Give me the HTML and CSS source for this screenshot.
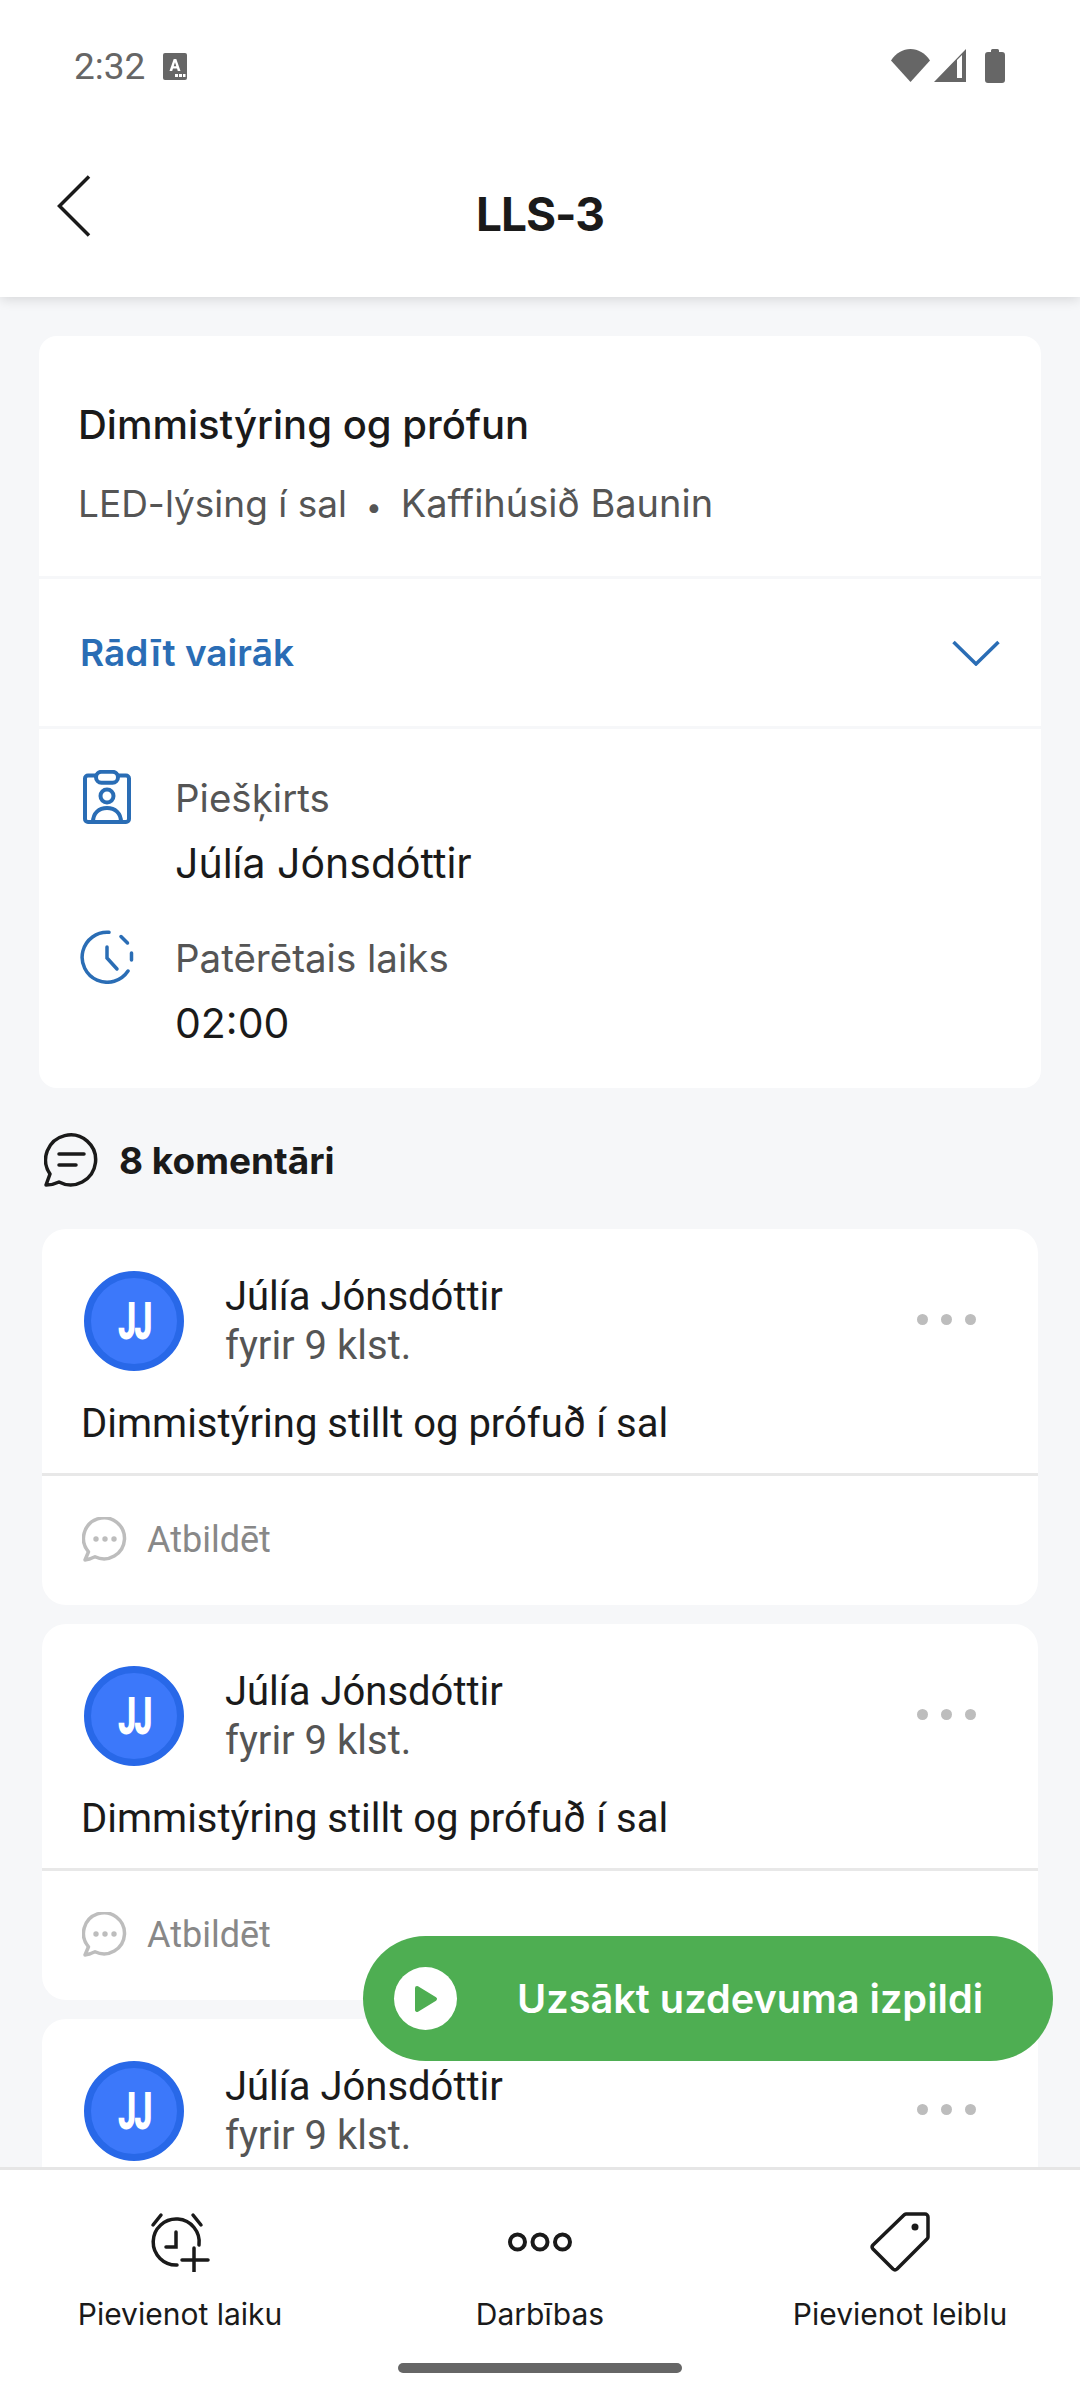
FILE: index.html
```html
<!DOCTYPE html>
<html lang="lv">
<head>
    <meta charset="UTF-8">
    <meta name="viewport" content="width=device-width, initial-scale=1.0">
    <title>LLS-3</title>
    <link rel="stylesheet" href="styles.css">
</head>
<body>
    <svg class="defs" width="0" height="0">
        <symbol id="icon-reply" viewBox="0 0 45 45">
            <path d="M3 43l3.5-8.2A20.5 20.5 0 1 1 13 39.8C9.500 41.500 6 42.800 3 43z" fill="none" stroke="#bdbdbd" stroke-width="3.500" stroke-linejoin="round"/>
            <circle cx="14" cy="22" r="2.700" fill="#bdbdbd"/>
            <circle cx="23" cy="22" r="2.700" fill="#bdbdbd"/>
            <circle cx="32" cy="22" r="2.700" fill="#bdbdbd"/>
        </symbol>
    </svg>

    <div class="status-bar">
        <div class="status-left">
            <span class="status-time">2:32</span>
            <svg width="24" height="27" viewBox="0 0 24 27">
                <rect width="24" height="27" rx="2" fill="#666"/>
                <path d="M6.500 18L10.700 6h2.600l4.200 12h-2.700l-.8-2.600H10l-.8 2.600zM10.700 13.300h2.600L12 9.200z" fill="#fff"/>
                <rect x="12" y="21" width="3" height="3" fill="#fff"/>
                <rect x="16" y="21" width="3" height="3" fill="#fff"/>
                <rect x="20" y="21" width="2.500" height="3" fill="#fff"/>
            </svg>
        </div>
        <div class="status-right">
            <svg width="39" height="33" viewBox="0 0 39 33"><path d="M0 11.500C5 4 12 0 19.500 0S34 4 39 11.500L19.500 33z" fill="#666"/></svg>
            <svg width="32" height="33" viewBox="0 0 32 33"><path d="M32 0v33H0zM23 11v18h5V6z" fill="#666" fill-rule="evenodd"/></svg>
            <svg width="20" height="34" viewBox="0 0 20 34"><path d="M6 3V1.500Q6 0 7.500 0h5Q14 0 14 1.500V3h3q3 0 3 3v25q0 3-3 3H3q-3 0-3-3V6q0-3 3-3z" fill="#666"/></svg>
        </div>
    </div>

    <header class="top-bar">
        <svg class="back" width="34" height="62" viewBox="0 0 34 62"><path d="M32 1.500L2.500 31 32 60.500" fill="none" stroke="#1a1a1a" stroke-width="3.500"/></svg>
        <h1>LLS-3</h1>
    </header>

    <main class="content">
        <section class="card">
            <div class="card-head">
                <h2>Dimmistýring og prófun</h2>
                <p>LED-lýsing í sal<span class="sep">•</span><span class="place">Kaffihúsið Baunin</span></p>
            </div>
            <div class="more">
                <span>Rādīt vairāk</span>
                <svg width="48" height="26" viewBox="0 0 48 26"><path d="M1.500 2L24 24 46.500 2" fill="none" stroke="#2a6db5" stroke-width="3.500"/></svg>
            </div>
            <div class="info">
                <div class="info-row">
                    <svg class="info-icon" width="54" height="54" viewBox="0 0 54 54">
                        <g fill="none" stroke="#2a6db5" stroke-width="4" stroke-linejoin="round">
                            <path d="M16 5.500H8a3 3 0 0 0-3 3V49a3 3 0 0 0 3 3h38a3 3 0 0 0 3-3V8.500a3 3 0 0 0-3-3h-8"/>
                            <rect x="16" y="1.800" width="22" height="11" rx="5.500"/>
                            <circle cx="27" cy="26" r="6.500"/>
                            <path d="M13 52c0-9 6-14 14-14s14 5 14 14"/>
                        </g>
                    </svg>
                    <div class="info-body">
                        <div class="info-label">Piešķirts</div>
                        <div class="info-value">Júlía Jónsdóttir</div>
                    </div>
                </div>
                <div class="info-row">
                    <svg class="info-icon" width="54" height="54" viewBox="0 0 54 54">
                        <g fill="none" stroke="#2a6db5" stroke-width="3.500" stroke-linecap="round">
                            <path d="M29 2.300A25 25 0 1 0 48 41"/>
                            <path d="M41 6.500l6.500 6.500"/>
                            <path d="M51.500 23v7"/>
                            <path d="M27 17v11l10 11"/>
                        </g>
                    </svg>
                    <div class="info-body">
                        <div class="info-label">Patērētais laiks</div>
                        <div class="info-value">02:00</div>
                    </div>
                </div>
            </div>
        </section>

        <div class="comments-title">
            <svg width="54" height="54" viewBox="0 0 54 54">
                <path d="M2 52l4-11A25 25 0 1 1 15 49C11 51 6 52 2 52z" fill="none" stroke="#1a1a1a" stroke-width="3.500" stroke-linejoin="round"/>
                <path d="M15 21h25M15 32h17" stroke="#1a1a1a" stroke-width="3.500" stroke-linecap="round"/>
            </svg>
            <span>8 komentāri</span>
        </div>

        <article class="comment">
            <div class="comment-head">
                <div class="avatar"><span>JJ</span></div>
                <div class="comment-who">
                    <div class="comment-name">Júlía Jónsdóttir</div>
                    <div class="comment-time">fyrir 9 klst.</div>
                </div>
                <div class="dots"><i></i><i></i><i></i></div>
            </div>
            <p class="comment-text">Dimmistýring stillt og prófuð í sal</p>
            <div class="comment-foot">
                <svg width="45" height="45"><use href="#icon-reply"/></svg>
                <span>Atbildēt</span>
            </div>
        </article>

        <article class="comment">
            <div class="comment-head">
                <div class="avatar"><span>JJ</span></div>
                <div class="comment-who">
                    <div class="comment-name">Júlía Jónsdóttir</div>
                    <div class="comment-time">fyrir 9 klst.</div>
                </div>
                <div class="dots"><i></i><i></i><i></i></div>
            </div>
            <p class="comment-text">Dimmistýring stillt og prófuð í sal</p>
            <div class="comment-foot">
                <svg width="45" height="45"><use href="#icon-reply"/></svg>
                <span>Atbildēt</span>
            </div>
        </article>

        <article class="comment">
            <div class="comment-head">
                <div class="avatar"><span>JJ</span></div>
                <div class="comment-who">
                    <div class="comment-name">Júlía Jónsdóttir</div>
                    <div class="comment-time">fyrir 9 klst.</div>
                </div>
                <div class="dots"><i></i><i></i><i></i></div>
            </div>
        </article>
    </main>

    <button class="start" type="button">
        <span class="start-icon">
            <svg width="24" height="28" viewBox="0 0 24 28"><path d="M3 3l18 11L3 25z" fill="#4eae52" stroke="#4eae52" stroke-width="4" stroke-linejoin="round"/></svg>
        </span>
        <span>Uzsākt uzdevuma izpildi</span>
    </button>

    <nav class="bottom-bar">
        <div class="action">
            <svg width="60" height="60" viewBox="0 0 60 60">
                <g fill="none" stroke="#1a1a1a" stroke-width="3.500" stroke-linecap="round">
                    <path d="M27 53A23 23 0 1 1 49 33"/>
                    <path d="M3 13L11 3M51 13L43 3"/>
                    <path d="M26 20v15H16"/>
                    <path d="M44 36v24M32 48h26"/>
                </g>
            </svg>
            <span>Pievienot laiku</span>
        </div>
        <div class="action">
            <svg width="64" height="60" viewBox="0 0 64 60">
                <g fill="none" stroke="#1a1a1a" stroke-width="4">
                    <circle cx="9.500" cy="30" r="7.500"/>
                    <circle cx="32" cy="30" r="7.500"/>
                    <circle cx="54.500" cy="30" r="7.500"/>
                </g>
            </svg>
            <span>Darbības</span>
        </div>
        <div class="action">
            <svg width="60" height="60" viewBox="0 0 60 60">
                <path d="M36 2h19a3 3 0 0 1 3 3v20a3 3 0 0 1-1 2L27 57a3 3 0 0 1-4 0L3 37a3 3 0 0 1 0-4L34 3a3 3 0 0 1 2-1z" fill="none" stroke="#1a1a1a" stroke-width="3.500" stroke-linejoin="round"/>
                <circle cx="45" cy="15" r="3.500" fill="#1a1a1a"/>
            </svg>
            <span>Pievienot leiblu</span>
        </div>
        <div class="home-bar"></div>
    </nav>
</body>
</html>
```

FILE: styles.css
```css
* {
    box-sizing: border-box;
}

html, body {
    margin: 0;
    padding: 0;
}

body {
    position: relative;
    width: 1080px;
    height: 2400px;
    overflow: hidden;
    display: flex;
    flex-direction: column;
    background-color: #f6f7f9;
    font-family: Inter, "Noto Sans", sans-serif;
    color: #1a1a1a;
}

.defs {
    position: absolute;
}

.status-bar {
    flex: none;
    height: 131px;
    position: relative;
    z-index: 2;
    padding: 49px 75px 0 74px;
    display: flex;
    justify-content: space-between;
    align-items: flex-start;
    background: white;
}

.status-left {
    display: flex;
    align-items: center;
    gap: 18px;
    height: 34px;
    color: #666;
}

.status-time {
    font-family: Roboto, sans-serif;
    font-size: 37px;
}

.status-right {
    display: flex;
    gap: 4px;
}

.status-right svg:last-child {
    margin-left: 15px;
}

.top-bar {
    flex: none;
    height: 166px;
    position: relative;
    z-index: 1;
    display: flex;
    align-items: center;
    justify-content: center;
    background: white;
    box-shadow: 0 2px 12px rgba(0, 0, 0, 0.14);
}

.top-bar h1 {
    margin: 0;
    font-size: 46px;
    font-weight: 700;
    letter-spacing: -1px;
}

.back {
    position: absolute;
    left: 57px;
    top: 44px;
}

.content {
    flex: 1;
    min-height: 0;
    overflow: hidden;
    padding: 39px 39px 0;
}

.card {
    background: white;
    border-radius: 18px;
    height: 752px;
}

.card-head {
    height: 243px;
    padding: 64px 39px 0;
    border-bottom: 3px solid #f6f7f9;
}

.card-head h2 {
    margin: 0;
    font-size: 40px;
    font-weight: 500;
    line-height: 50px;
}

.card-head p {
    margin: 28px 0 0;
    font-size: 37px;
    line-height: 50px;
    color: #555;
}

.sep {
    margin: 0 19px;
    font-size: 28px;
}

.place {
    font-size: 38px;
}

.more {
    height: 150px;
    padding: 0 41px;
    display: flex;
    justify-content: space-between;
    align-items: center;
    border-bottom: 3px solid #f6f7f9;
    color: #2a6db5;
    font-size: 37px;
    font-weight: 600;
}

.info {
    padding: 38px 41px 0 41px;
}

.info-row {
    display: flex;
    align-items: flex-start;
    height: 160px;
}

.info-icon {
    flex: none;
    margin: 3px 41px 0 0;
}

.info-body {
    padding-top: 6px;
}

.info-label {
    font-size: 38.500px;
    line-height: 50px;
    color: #555;
}

.info-value {
    margin-top: 15px;
    font-size: 41px;
    line-height: 50px;
}

.comments-title {
    height: 54px;
    margin: 45px 0 42px 5px;
    display: flex;
    align-items: center;
    gap: 21px;
    font-size: 37px;
    font-weight: 700;
}

.comment {
    margin: 0 3px 19px;
    height: 376px;
    background: white;
    border-radius: 24px;
}

.comment-head {
    display: flex;
    align-items: center;
    padding: 42px 42px 0 42px;
}

.avatar {
    flex: none;
    width: 100px;
    height: 100px;
    border-radius: 50%;
    border: 7px solid #2868e8;
    background: #3c78fa;
    color: white;
    font-family: Roboto, sans-serif;
    font-size: 52px;
    font-weight: 900;
    display: flex;
    align-items: center;
    justify-content: center;
}

.avatar span {
    display: block;
    letter-spacing: -3px;
    transform: scaleX(0.62);
}

.comment-who {
    flex: 1;
    margin-left: 41px;
    font-family: Roboto, sans-serif;
    font-size: 40px;
    line-height: 49px;
}

.comment-time {
    color: #555;
}

.dots {
    display: flex;
    gap: 13px;
    margin-right: 20px;
    margin-bottom: 3px;
}

.dots i {
    display: block;
    width: 11px;
    height: 11px;
    border-radius: 50%;
    background: #bdbdbd;
}

.comment-text {
    margin: 0;
    height: 105px;
    padding: 28px 39px 0;
    font-family: Roboto, sans-serif;
    font-size: 40px;
    line-height: 50px;
    border-bottom: 3px solid #e8e8e8;
}

.comment-foot {
    display: flex;
    align-items: center;
    gap: 20px;
    padding: 41px 40px 0;
    font-family: Roboto, sans-serif;
    font-size: 36px;
    color: #888;
}

.start {
    position: absolute;
    left: 363px;
    top: 1936px;
    width: 690px;
    height: 125px;
    padding: 0 0 0 31px;
    border: none;
    border-radius: 63px;
    background-color: #4eae52;
    color: white;
    font-family: Inter, sans-serif;
    font-size: 39.700px;
    font-weight: 600;
    display: flex;
    align-items: center;
    gap: 60px;
}

.start-icon {
    width: 63px;
    height: 63px;
    border-radius: 50%;
    background: white;
    display: flex;
    align-items: center;
    justify-content: center;
}

.bottom-bar {
    flex: none;
    position: relative;
    height: 233px;
    display: grid;
    grid-template-columns: repeat(3, 1fr);
    background: white;
    border-top: 3px solid #e6e6e6;
}

.action {
    display: flex;
    flex-direction: column;
    align-items: center;
    padding-top: 42px;
    font-size: 30px;
    line-height: 40px;
}

.action span {
    margin-top: 22px;
}

.home-bar {
    position: absolute;
    left: 398px;
    top: 193px;
    width: 284px;
    height: 10px;
    border-radius: 5px;
    background: #666;
}
```
